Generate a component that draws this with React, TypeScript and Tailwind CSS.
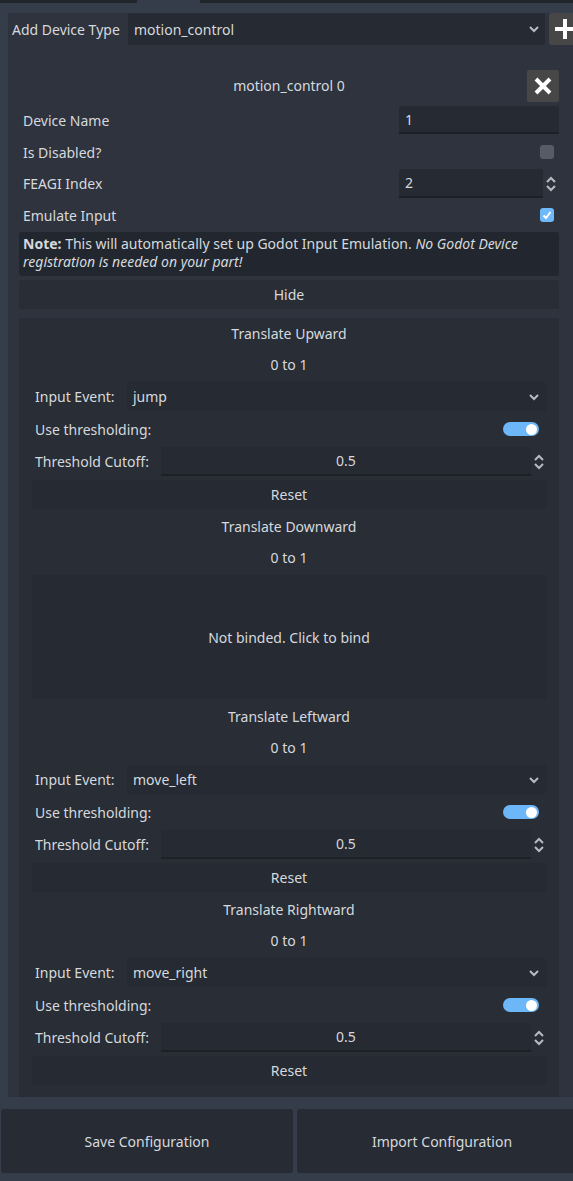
import React from "react";

const Chevron = () => (
  <svg width="12" height="8" viewBox="0 0 12 8" fill="none">
    <path d="M2 2 L6 6 L10 2" stroke="#b8bcc2" strokeWidth="2" />
  </svg>
);

const SpinArrows = () => (
  <svg width="12" height="18" viewBox="0 0 12 18" fill="none">
    <path d="M2 7 L6 3 L10 7" stroke="#b8bcc2" strokeWidth="2" />
    <path d="M2 11 L6 15 L10 11" stroke="#b8bcc2" strokeWidth="2" />
  </svg>
);

const Switch = () => (
  <div className="w-[36px] h-[14px] rounded-full bg-[#6db6f7] flex items-center justify-end pr-[2px]">
    <div className="w-[11px] h-[11px] rounded-full bg-white" />
  </div>
);

const Label = ({ text }: { text: string }) => (
  <div className="h-[27px] flex items-center justify-center">{text}</div>
);

const BoundBlock = ({ title, event }: { title: string; event: string }) => (
  <>
    <Label text={title} />
    <Label text="0 to 1" />
    <div className="h-[29px] flex items-center">
      <div className="w-[95px] pl-[3px]">Input Event:</div>
      <div className="flex-1 h-full bg-[#252a33] rounded-[3px] flex items-center justify-between pl-[6px] pr-[6px]">
        <span>{event}</span>
        <Chevron />
      </div>
    </div>
    <div className="h-[28px] flex items-center justify-between pl-[3px] pr-[7px]">
      <span>Use thresholding:</span>
      <Switch />
    </div>
    <div className="h-[29px] flex items-center">
      <div className="w-[129px] pl-[3px]">Threshold Cutoff:</div>
      <div className="w-[370px] h-full bg-[#252a33] rounded-t-[3px] border-b-2 border-[#1c2027] flex items-center justify-center">
        0.5
      </div>
      <div className="flex-1 flex justify-center">
        <SpinArrows />
      </div>
    </div>
    <div className="h-[29px] bg-[#252a33] rounded-[3px] flex items-center justify-center">Reset</div>
  </>
);

export default function App() {
  return (
    <div className="w-[573px] h-[1181px] bg-[#363d4a] flex flex-col overflow-hidden font-['Noto_Sans',sans-serif] text-[14px] text-[#d6d9dd]">
      <div className="h-[3px] flex shrink-0">
        <div className="w-[137px] bg-[#21262d]" />
        <div className="w-[63px]" />
        <div className="flex-1 bg-[#21262d]" />
      </div>

      <div className="ml-[8px] mt-[10px] h-[1084px] shrink-0 bg-[#2e333d] overflow-hidden flex flex-col">
        <div className="h-[32px] shrink-0 flex items-center">
          <div className="w-[120px] shrink-0 pl-[4px] whitespace-nowrap">Add Device Type</div>
          <div className="w-[417px] shrink-0 h-full bg-[#252a33] rounded-[3px] flex items-center justify-between pl-[6px] pr-[5px]">
            <span>motion_control</span>
            <Chevron />
          </div>
          <div className="ml-[4px] w-[32px] shrink-0 h-full bg-[#474747] rounded-l-[3px] flex items-center pl-[4px]">
            <svg width="24" height="24" viewBox="0 0 24 24">
              <path d="M12 2 V22 M2 12 H22" stroke="#ffffff" strokeWidth="4" />
            </svg>
          </div>
        </div>

        <div className="ml-[11px] w-[540px] mt-[25px] flex flex-col">
          <div className="h-[32px] grid grid-cols-[32px_1fr_32px] items-center">
            <div />
            <div className="text-center pb-[1px]">motion_control 0</div>
            <div className="h-[32px] bg-[#474747] rounded-[2px] flex items-center justify-center">
              <svg width="20" height="20" viewBox="0 0 20 20">
                <path d="M3 3 L17 17 M17 3 L3 17" stroke="#ffffff" strokeWidth="4" />
              </svg>
            </div>
          </div>

          <div className="mt-[4px] h-[28px] flex items-center justify-between">
            <span className="pl-[4px]">Device Name</span>
            <div className="w-[160px] h-full bg-[#252a33] rounded-t-[3px] border-b-2 border-[#1c2027] flex items-center pl-[6px]">1</div>
          </div>
          <div className="mt-[4px] h-[28px] flex items-center justify-between pr-[5px]">
            <span className="pl-[4px]">Is Disabled?</span>
            <div className="w-[14px] h-[14px] rounded-[3px] bg-[#565c66]" />
          </div>
          <div className="mt-[3px] h-[29px] flex items-center">
            <span className="pl-[4px] flex-1">FEAGI Index</span>
            <div className="w-[144px] h-full bg-[#252a33] rounded-t-[3px] border-b-2 border-[#1c2027] flex items-center pl-[6px]">2</div>
            <div className="w-[16px] flex justify-center">
              <SpinArrows />
            </div>
          </div>
          <div className="mt-[3px] h-[28px] flex items-center justify-between pr-[5px]">
            <span className="pl-[4px]">Emulate Input</span>
            <div className="w-[14px] h-[14px] rounded-[3px] bg-[#6fb8f9] flex items-center justify-center">
              <svg width="10" height="10" viewBox="0 0 10 10" fill="none">
                <path d="M1.5 5.5 L4 8 L8.5 2" stroke="#ffffff" strokeWidth="2" />
              </svg>
            </div>
          </div>

          <div className="mt-[3px] h-[44px] bg-[#22272f] rounded-[3px] pl-[4px] pr-[2px] pt-[3px] leading-[18px]">
            <b className="font-bold">Note:</b> This will automatically set up Godot Input Emulation.{" "}
            <i>No Godot Device registration is needed on your part!</i>
          </div>
          <div className="mt-[4px] h-[29px] bg-[#282d36] rounded-[3px] flex items-center justify-center">Hide</div>

          <div className="mt-[9px] bg-[#282d36] px-[13px] pt-[2px] flex flex-col gap-[4px]">
            <BoundBlock title="Translate Upward" event="jump" />
            <Label text="Translate Downward" />
            <Label text="0 to 1" />
            <div className="h-[124px] bg-[#252a33] rounded-[3px] flex items-center justify-center">
              Not binded. Click to bind
            </div>
            <BoundBlock title="Translate Leftward" event="move_left" />
            <BoundBlock title="Translate Rightward" event="move_right" />
            <div className="h-[20px]" />
          </div>
        </div>
      </div>

      <div className="mt-[12px] h-[64px] shrink-0 flex gap-[4px] pl-[1px]">
        <div className="w-[292px] bg-[#262b34] rounded-[3px] flex items-center justify-center">Save Configuration</div>
        <div className="flex-1 bg-[#262b34] rounded-l-[3px] flex items-center justify-center pl-[14px]">Import Configuration</div>
      </div>
    </div>
  );
}
